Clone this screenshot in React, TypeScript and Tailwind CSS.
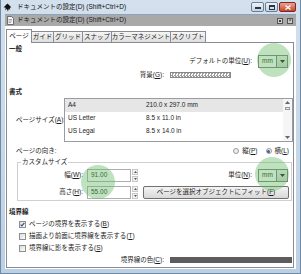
import React from 'react';

const font = "font-['Liberation_Sans','Noto_Sans_CJK_JP',sans-serif]";

function Checkbox({ checked }: { checked?: boolean }) {
    return (
        <div className="w-[7px] h-[7px] border border-[#8e8f8f] bg-gradient-to-br from-[#dcdcdc] to-[#fbfbfb] flex items-center justify-center">
            {checked && (
                <svg width="5" height="5" viewBox="0 0 5 5">
                    <polyline points="0.6,2.6 1.9,3.9 4.4,0.8" fill="none" stroke="#2a4f8f" strokeWidth="1.1" />
                </svg>
            )}
        </div>
    );
}

function Radio({ checked }: { checked?: boolean }) {
    return (
        <div className="w-[6px] h-[6px] rounded-full border border-[#9a9a9a] bg-[#f0f0f0] flex items-center justify-center">
            {checked && <div className="w-[3px] h-[3px] rounded-full bg-[#3a5f95]" />}
        </div>
    );
}

function UnitSelect() {
    return (
        <div className="flex h-[13px] w-[30px] border border-[#7a7a7a] bg-white">
            <div className="flex-1 flex items-center pl-[3px]">mm</div>
            <div className="w-[11px] border-l border-[#7a7a7a] bg-gradient-to-b from-[#f2f2f2] to-[#d6d6d6] flex items-center justify-center">
                <svg width="5" height="3" viewBox="0 0 5 3">
                    <polygon points="0,0 5,0 2.5,3" fill="#111" />
                </svg>
            </div>
        </div>
    );
}

function Spin({ value }: { value: string }) {
    return (
        <div className="flex items-stretch h-[13px]">
            <div className="w-[44px] border border-[#abadb3] bg-white flex items-center pl-[3px]">{value}</div>
            <div className="w-[6px] ml-[1px] flex flex-col gap-[1px]">
                <div className="flex-1 border border-[#c8c8c8] bg-[#f3f3f3] flex items-center justify-center">
                    <svg width="3" height="2" viewBox="0 0 3 2"><polygon points="0,2 3,2 1.5,0" fill="#555" /></svg>
                </div>
                <div className="flex-1 border border-[#c8c8c8] bg-[#f3f3f3] flex items-center justify-center">
                    <svg width="3" height="2" viewBox="0 0 3 2"><polygon points="0,0 3,0 1.5,2" fill="#555" /></svg>
                </div>
            </div>
        </div>
    );
}

const tabs = [
    { label: 'ガイド', w: 'w-[22px]' },
    { label: 'グリッド', w: 'w-[29px]' },
    { label: 'スナップ', w: 'w-[29px]' },
    { label: 'カラーマネジメント', w: 'w-[59px]' },
    { label: 'スクリプト', w: 'w-[35px]' },
];

const sizes = [
    { name: 'A4', dim: '210.0 x 297.0 mm', selected: true },
    { name: 'US Letter', dim: '8.5 x 11.0 in' },
    { name: 'US Legal', dim: '8.5 x 14.0 in' },
];

export default function App() {
    return (
        <div className={`${font} relative w-[301px] h-[274px] overflow-hidden bg-gradient-to-b from-[#d3e0ed] to-[#bcd0e4] text-[6.5px] leading-none text-[#1c1c1c] whitespace-nowrap flex flex-col border-x border-b border-[#6e8aa6]`}>
            {/* window title */}
            <div className="h-[14px] flex items-center pl-[2px] pr-[4px] shrink-0">
                <svg width="9" height="9" viewBox="0 0 10 10">
                    <path d="M5 0.5 L9.2 4.6 L7.6 5.2 L8 8 L6.6 6 L5.4 9.5 L4.4 6.4 L2.6 8.4 L3 5.4 L0.8 4.6 Z" fill="#111" />
                </svg>
                <span className="ml-[5px] text-[#111]">ドキュメントの設定(D) (Shift+Ctrl+D)</span>
                <div className="ml-auto flex items-start gap-[1px] self-start mt-[2px]">
                    <div className="w-[13px] h-[10px] rounded-[2px] border border-[#6d7f92] bg-gradient-to-b from-[#eef3f8] to-[#c3d2e2] flex items-end justify-center pb-[2px]">
                        <div className="w-[6px] h-[2px] bg-[#2b3440]" />
                    </div>
                    <div className="w-[13px] h-[10px] rounded-[2px] border border-[#6d7f92] bg-gradient-to-b from-[#eef3f8] to-[#c3d2e2] flex items-center justify-center">
                        <div className="w-[6px] h-[5px] border border-[#2b3440] border-t-2" />
                    </div>
                    <div className="w-[17px] h-[10px] rounded-[2px] border border-[#7a2a20] bg-gradient-to-b from-[#e8a393] to-[#c9402a] flex items-center justify-center">
                        <svg width="6" height="5" viewBox="0 0 6 5">
                            <path d="M0.5 0.5 L5.5 4.5 M5.5 0.5 L0.5 4.5" stroke="#fff" strokeWidth="1.3" />
                        </svg>
                    </div>
                </div>
            </div>

            {/* client */}
            <div className="flex-1 mx-[4px] mb-[4px] flex flex-col border-t border-[#8da3ba]">
                <div className="h-[11px] shrink-0 bg-[#a9a9a9] flex items-center pl-[2px] pr-[3px]">
                    <svg width="7" height="9" viewBox="0 0 7 9">
                        <path d="M0.5 0.5 H4.5 L6.5 2.5 V8.5 H0.5 Z" fill="#f4f4f4" stroke="#555" strokeWidth="0.8" />
                        <path d="M1.5 3.5 H5 M1.5 5 H5 M1.5 6.5 H4" stroke="#777" strokeWidth="0.6" />
                    </svg>
                    <span className="ml-[3px]">ドキュメントの設定(D) (Shift+Ctrl+D)</span>
                    <div className="ml-auto flex gap-[4px]">
                        <div className="w-[6px] h-[6px] border border-[#555] bg-[#d0d0d0] flex items-center justify-center">
                            <div className="w-[2px] h-[2px] bg-[#444]" />
                        </div>
                        <div className="w-[6px] h-[6px] border border-[#555] bg-[#d0d0d0] flex items-center justify-center text-[5px] leading-none">×</div>
                    </div>
                </div>

                <div className="flex-1 bg-white pl-[1px] pr-[2px] pt-[3px] pb-[1px] flex flex-col">
                    {/* tabs */}
                    <div className="h-[13px] flex items-end shrink-0">
                        <div className="relative z-10 w-[26px] h-[14px] -mb-[1px] bg-white border-x border-t border-[#898c95] flex items-center justify-center pb-[1px]">ページ</div>
                        {tabs.map((t) => (
                            <div key={t.label} className={`${t.w} h-[11px] border-t border-r border-[#898c95] bg-gradient-to-b from-[#f5f5f5] to-[#dedede] flex items-center justify-center`}>
                                {t.label}
                            </div>
                        ))}
                    </div>

                    {/* page panel */}
                    <div className="flex-1 border border-[#898c95] bg-white flex flex-col pl-[2px]">
                        <div className="h-[12px] flex items-center font-bold">一般</div>
                        <div className="h-[13px] flex items-center justify-end pr-[5px] gap-[6px]">
                            <span>デフォルトの単位(<u>U</u>):</span>
                            <UnitSelect />
                        </div>
                        <div className="h-[14px] flex items-center">
                            <span className="w-[155px] text-right">背景(<u>G</u>):</span>
                            <div className="ml-[6px] w-[61px] h-[6px] border border-[#888] bg-[repeating-conic-gradient(#9c9c9c_0_25%,#ffffff_0_50%)] bg-[length:3px_3px]" />
                        </div>

                        <div className="mt-[4px] h-[12px] flex items-center font-bold">書式</div>
                        <div className="h-[44px] flex items-center">
                            <span className="w-[55px] pl-[7px]">ページサイズ(<u>A</u>):</span>
                            <div className="flex-1 h-[44px] border border-[#9a9ca3] bg-white flex">
                                <div className="flex-1 flex flex-col">
                                    {sizes.map((s) => (
                                        <div key={s.name} className={`h-[13px] flex items-center pl-[3px] ${s.selected ? 'bg-[#e6e6e6]' : ''}`}>
                                            <span className="w-[78px]">{s.name}</span>
                                            <span>{s.dim}</span>
                                        </div>
                                    ))}
                                </div>
                                <div className="w-[9px] bg-[#f6f6f6] flex flex-col items-center py-[2px]">
                                    <svg width="5" height="3" viewBox="0 0 5 3"><polygon points="0,3 5,3 2.5,0" fill="#666" /></svg>
                                    <div className="mt-[3px] w-[5px] h-[3px] border border-[#999] bg-[#eaeaea]" />
                                    <div className="mt-auto">
                                        <svg width="5" height="3" viewBox="0 0 5 3"><polygon points="0,0 5,0 2.5,3" fill="#666" /></svg>
                                    </div>
                                </div>
                            </div>
                        </div>

                        <div className="mt-[3px] h-[12px] flex items-center pl-[7px] pr-[4px]">
                            <span>ページの向き:</span>
                            <div className="ml-auto flex items-center gap-[2px]">
                                <Radio />
                                <span className="ml-[1px]">縦(<u>P</u>)</span>
                                <div className="ml-[6px]"><Radio checked /></div>
                                <span className="ml-[1px]">横(<u>L</u>)</span>
                            </div>
                        </div>

                        {/* custom size */}
                        <div className="relative mt-[5px] ml-[8px] mr-[1px] h-[39px] border border-[#d0d0d0] pt-[6px] flex flex-col gap-[4px]">
                            <span className="absolute -top-[4px] left-[3px] bg-white px-[1px]">カスタムサイズ</span>
                            <div className="h-[13px] flex items-center">
                                <span className="w-[65px] text-right">幅(<u>W</u>):</span>
                                <div className="ml-[4px]"><Spin value="91.00" /></div>
                                <span className="flex-1 text-right">単位(<u>N</u>):</span>
                                <div className="ml-[6px] mr-[3px]"><UnitSelect /></div>
                            </div>
                            <div className="h-[13px] flex items-center">
                                <span className="w-[65px] text-right">高さ(<u>H</u>):</span>
                                <div className="ml-[4px]"><Spin value="55.00" /></div>
                                <div className="ml-[5px] mr-[2px] flex-1 h-[13px] rounded-[2px] border border-[#707070] bg-gradient-to-b from-[#f4f4f4] to-[#d9d9d9] flex items-center justify-center">
                                    ページを選択オブジェクトにフィット(<u>F</u>)
                                </div>
                            </div>
                        </div>

                        <div className="mt-[5px] h-[12px] flex items-center font-bold">境界線</div>
                        {[
                            { label: 'ページの境界を表示する', key: 'B', checked: true },
                            { label: '描画より前面に境界線を表示する', key: 'T' },
                            { label: '境界線に影を表示する', key: 'S' },
                        ].map((c) => (
                            <div key={c.key} className="h-[12px] flex items-center pl-[10px] gap-[3px]">
                                <Checkbox checked={c.checked} />
                                <span>{c.label}(<u>{c.key}</u>)</span>
                            </div>
                        ))}
                        <div className="h-[12px] flex items-center">
                            <span className="w-[155px] text-right">境界線の色(<u>C</u>):</span>
                            <div className="ml-[6px] w-[122px] h-[6px] bg-[#5c5c5c]" />
                        </div>
                    </div>
                </div>
            </div>

            {/* highlight circles */}
            <div className="absolute left-[256px] top-[43px] w-[34px] h-[34px] rounded-full bg-[rgba(100,185,100,0.42)]" />
            <div className="absolute left-[254px] top-[157px] w-[34px] h-[34px] rounded-full bg-[rgba(100,185,100,0.42)]" />
            <div className="absolute left-[80px] top-[165px] w-[34px] h-[34px] rounded-full bg-[rgba(100,185,100,0.42)]" />
        </div>
    );
}
